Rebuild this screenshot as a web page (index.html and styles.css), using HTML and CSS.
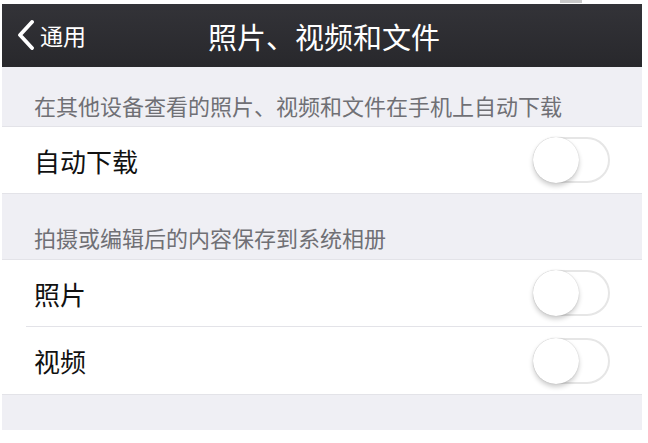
FILE: index.html
```html
<!DOCTYPE html>
<html lang="zh-CN">
<head>
    <meta charset="UTF-8">
    <meta name="viewport" content="width=device-width, initial-scale=1.0">
    <title>照片、视频和文件</title>
    <link rel="stylesheet" href="styles.css">
</head>
<body>
    <div class="top-mark"></div>

    <div class="screen">
        <!-- NAV BAR -->
        <header class="nav-bar">
            <a class="nav-back" href="#">
                <svg class="chevron" width="17" height="30" viewBox="0 0 17 30">
                    <path d="M15 2 L3 15 L15 28" fill="none" stroke="#fff" stroke-width="3.8" stroke-linecap="round" stroke-linejoin="round"/>
                </svg>
                <span>通用</span>
            </a>
            <h1 class="nav-title">照片、视频和文件</h1>
        </header>

        <!-- GROUP 1 -->
        <div class="group-header first">在其他设备查看的照片、视频和文件在手机上自动下载</div>
        <ul class="group">
            <li class="cell">
                <span class="cell-label">自动下载</span>
                <span class="switch"><span class="knob"></span></span>
            </li>
        </ul>

        <!-- GROUP 2 -->
        <div class="group-header">拍摄或编辑后的内容保存到系统相册</div>
        <ul class="group">
            <li class="cell">
                <span class="cell-label">照片</span>
                <span class="switch"><span class="knob"></span></span>
            </li>
            <li class="cell tall">
                <span class="cell-label">视频</span>
                <span class="switch"><span class="knob"></span></span>
            </li>
        </ul>

        <div class="group-footer"></div>
    </div>
</body>
</html>
```

FILE: styles.css
```css
/* Theme */
:root {
    --nav-top: #333338;
    --nav-bottom: #28282c;
    --group-bg: #efeff4;
    --cell-bg: #ffffff;
    --line-color: #e3e3e8;
    --header-text: #707075;
    --cell-text: #111111;
    --font-family: "Noto Sans CJK SC", "Noto Sans", sans-serif;
}

body {
    margin: 0;
    background-color: #ffffff;
    font-family: var(--font-family);
    position: relative;
}

.top-mark {
    position: absolute;
    top: 0;
    left: 560px;
    width: 22px;
    height: 3px;
    background-color: #c8c8c8;
}

.screen {
    width: 640px;
    margin: 4px 0 0 2px;
    background-color: var(--group-bg);
}

/* Nav Bar */
.nav-bar {
    height: 63px;
    background: linear-gradient(to bottom, var(--nav-top), var(--nav-bottom));
    display: flex;
    align-items: center;
    justify-content: center;
    position: relative;
    color: #ffffff;
}
.nav-back {
    position: absolute;
    left: 15px;
    top: 15px;
    display: flex;
    align-items: center;
    gap: 6px;
    color: #ffffff;
    text-decoration: none;
    font-size: 23px;
    line-height: 32px;
}
.nav-title {
    margin: 0 0 0 4px;
    font-size: 29px;
    font-weight: 400;
    line-height: 40px;
}

/* Groups */
.group-header {
    height: 66px;
    box-sizing: border-box;
    padding: 0 0 9px 32px;
    display: flex;
    align-items: flex-end;
    font-size: 22px;
    line-height: 26px;
    color: var(--header-text);
    border-bottom: 1px solid var(--line-color);
}
.group-header.first {
    height: 60px;
    padding-bottom: 8px;
}
.group {
    list-style: none;
    margin: 0;
    padding: 0;
    background-color: var(--cell-bg);
    border-bottom: 1px solid var(--line-color);
}
.cell {
    height: 66px;
    margin-left: 24px;
    padding: 0 32px 0 8px;
    display: flex;
    align-items: center;
    justify-content: space-between;
    border-bottom: 1px solid var(--line-color);
}
.cell.tall {
    height: 67px;
}
.cell:last-child {
    border-bottom: none;
}
.cell-label {
    font-size: 26px;
    color: var(--cell-text);
}

/* Switch (off) */
.switch {
    width: 77px;
    height: 46px;
    box-sizing: border-box;
    border: 2px solid #e6e6e6;
    border-radius: 23px;
    background-color: #ffffff;
    position: relative;
}
.knob {
    position: absolute;
    top: -2px;
    left: -2px;
    width: 46px;
    height: 46px;
    border-radius: 50%;
    background-color: #ffffff;
    box-shadow: 0 3px 5px rgba(0, 0, 0, 0.2), 0 0 1px rgba(0, 0, 0, 0.25);
}

.group-footer {
    height: 35px;
}
```
